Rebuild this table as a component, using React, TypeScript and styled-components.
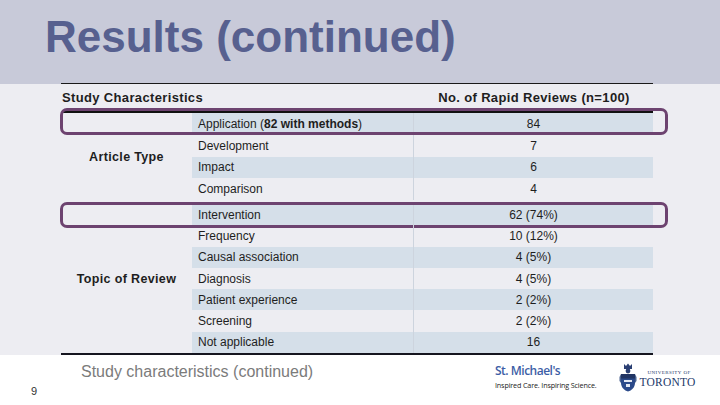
import React from "react";
import styled, { createGlobalStyle } from "styled-components";

const Global = createGlobalStyle`
  html, body { margin: 0; padding: 0; background: #ffffff; }
  body { width: 720px; height: 405px; overflow: hidden; font-family: "Liberation Sans", Arial, sans-serif; }
`;

const Slide = styled.div`
  width: 720px;
  height: 405px;
  display: flex;
  flex-direction: column;
  background: #ffffff;
`;

const Header = styled.header`
  height: 84px;
  flex: none;
  background: #c8cad9;
  box-sizing: border-box;
  padding: 15px 0 0 45px;
`;

const Title = styled.h1`
  margin: 0;
  font-family: "Liberation Sans", Arial, sans-serif;
  font-weight: 700;
  font-size: 44px;
  line-height: 44px;
  color: #57608f;
`;

const Body = styled.main`
  height: 271px;
  flex: none;
  background: #ededf2;
  padding-left: 61px;
  box-sizing: border-box;
`;

const Table = styled.div`
  width: 592px;
  border-top: 1px solid #1a1a1a;
  margin-top: -1px;
  display: flex;
  flex-direction: column;
  font-family: "Liberation Sans", Arial, sans-serif;
  color: #1e1e1e;
`;

const HeadRow = styled.div`
  height: 27px;
  display: grid;
  grid-template-columns: 352px 1fr;
  align-items: center;
  border-bottom: 2px solid #111111;
  margin-left: 2px;
  font-weight: 700;
  font-size: 13px;
  letter-spacing: 0.35px;
`;

const HeadCell = styled.div<{ $center?: boolean }>`
  text-align: ${(p) => (p.$center ? "center" : "left")};
  margin-left: ${(p) => (p.$center ? "0" : "-1px")};
`;

const Group = styled.div<{ $gap?: number }>`
  display: flex;
  margin-top: ${(p) => p.$gap ?? 0}px;
`;

const GroupLabel = styled.div`
  width: 131px;
  flex: none;
  display: flex;
  align-items: center;
  justify-content: center;
  font-weight: 700;
  font-size: 12.5px;
  letter-spacing: 0.35px;
  box-sizing: border-box;
`;

const Rows = styled.div`
  flex: 1;
  display: flex;
  flex-direction: column;
`;

const Row = styled.div<{ $shade?: boolean; $h: number }>`
  position: relative;
  height: ${(p) => p.$h}px;
  display: grid;
  grid-template-columns: 221px 1fr;
  align-items: center;
  background: ${(p) => (p.$shade ? "#d5dfe9" : "transparent")};
  font-size: 12px;
`;

const NameCell = styled.div`
  padding-left: 6px;
  white-space: nowrap;
`;

const ValueCell = styled.div`
  height: 100%;
  display: flex;
  align-items: center;
  justify-content: center;
  border-left: 1px solid #cdd4de;
  box-sizing: border-box;
`;

const Highlight = styled.div<{ $top: number; $height: number }>`
  position: absolute;
  left: -132px;
  right: -15px;
  top: ${(p) => p.$top}px;
  height: ${(p) => p.$height}px;
  border: 3px solid #6d4370;
  border-radius: 7px;
  box-sizing: border-box;
  pointer-events: none;
`;

const BottomRule = styled.div`
  height: 2px;
  background: #15151f;
`;

const Footer = styled.footer`
  flex: 1;
  display: flex;
  align-items: flex-start;
`;

const FootLeft = styled.div`
  width: 480px;
  display: flex;
  flex-direction: column;
`;

const Caption = styled.div`
  margin: 8px 0 0 81px;
  font-family: "Liberation Sans", Arial, sans-serif;
  font-size: 16px;
  line-height: 18px;
  color: #7b7b7b;
`;

const PageNum = styled.div`
  margin: 4px 0 0 31px;
  font-family: "Liberation Sans", Arial, sans-serif;
  font-size: 11px;
  color: #333;
`;

const Logos = styled.div`
  display: flex;
  align-items: flex-start;
  gap: 22px;
  margin: 8px 0 0 15px;
`;

const SMH = styled.div`
  display: flex;
  flex-direction: column;
  margin-top: 1px;
`;

const SMHName = styled.div`
  font-family: "Open Sans", "Liberation Sans", sans-serif;
  font-weight: 600;
  font-size: 12px;
  line-height: 14px;
  color: #3d5ea6;
  letter-spacing: -0.5px;
`;

const SMHTag = styled.div`
  margin-top: 3px;
  font-family: "Open Sans", "Liberation Sans", sans-serif;
  font-size: 7.2px;
  line-height: 9px;
  color: #222;
  letter-spacing: -0.15px;
`;

const UofT = styled.div`
  display: flex;
  align-items: center;
  gap: 3px;
`;

const UofTText = styled.div`
  display: flex;
  flex-direction: column;
  align-items: center;
  font-family: "Liberation Serif", "Times New Roman", serif;
  color: #23396a;
  padding-top: 2px;
`;

const UofTSmall = styled.div`
  font-size: 5px;
  letter-spacing: 0.45px;
  line-height: 7px;
  padding-left: 3px;
`;

const UofTBig = styled.div`
  font-size: 11.5px;
  line-height: 13px;
  letter-spacing: 0.2px;
`;

type Item = { name: React.ReactNode; value: string; hl?: { top: number; height: number } };

const article: Item[] = [
  {
    name: (
      <>
        Application (<b>82 with methods</b>)
      </>
    ),
    value: "84",
    hl: { top: -5, height: 27 },
  },
  { name: "Development", value: "7" },
  { name: "Impact", value: "6" },
  { name: "Comparison", value: "4" },
];

const topic: Item[] = [
  { name: "Intervention", value: "62 (74%)", hl: { top: -2, height: 26 } },
  { name: "Frequency", value: "10 (12%)" },
  { name: "Causal association", value: "4 (5%)" },
  { name: "Diagnosis", value: "4 (5%)" },
  { name: "Patient experience", value: "2 (2%)" },
  { name: "Screening", value: "2 (2%)" },
  { name: "Not applicable", value: "16" },
];

const Crest = () => (
  <svg width="18" height="29" viewBox="0 0 18 29">
    <path d="M5 1 L7 3 L9 0.5 L11 3 L13 1 L13 6 L5 6 Z" fill="#2a3f73" />
    <circle cx="9" cy="8" r="2.4" fill="#2a3f73" />
    <path d="M2 11 H16 V20 C16 24.5 12.5 27.5 9 28.5 C5.5 27.5 2 24.5 2 20 Z" fill="#2b4a8a" />
    <rect x="2" y="11" width="14" height="4.5" fill="#213463" />
    <path d="M5 17 h8 v2 h-8 z M7 21 h4 v3 h-4 z" fill="#e3e8f2" />
    <path d="M0.5 14 L2 11 L2 20 L0.5 18 Z M17.5 14 L16 11 L16 20 L17.5 18 Z" fill="#4a628f" />
  </svg>
);

export default function App() {
  return (
    <>
      <Global />
      <Slide>
        <Header>
          <Title>Results (continued)</Title>
        </Header>
        <Body>
          <Table>
            <HeadRow>
              <HeadCell>Study Characteristics</HeadCell>
              <HeadCell $center>No. of Rapid Reviews (n=100)</HeadCell>
            </HeadRow>
            <Group>
              <GroupLabel>Article Type</GroupLabel>
              <Rows>
                {article.map((it, i) => (
                  <Row key={i} $h={21.75} $shade={i % 2 === 0}>
                    <NameCell>{it.name}</NameCell>
                    <ValueCell>{it.value}</ValueCell>
                    {it.hl && <Highlight $top={it.hl.top} $height={it.hl.height} />}
                  </Row>
                ))}
              </Rows>
            </Group>
            <Group $gap={4}>
              <GroupLabel>Topic of Review</GroupLabel>
              <Rows>
                {topic.map((it, i) => (
                  <Row key={i} $h={21.3} $shade={i % 2 === 0}>
                    <NameCell>{it.name}</NameCell>
                    <ValueCell>{it.value}</ValueCell>
                    {it.hl && <Highlight $top={it.hl.top} $height={it.hl.height} />}
                  </Row>
                ))}
              </Rows>
            </Group>
            <BottomRule />
          </Table>
        </Body>
        <Footer>
          <FootLeft>
            <Caption>Study characteristics (continued)</Caption>
            <PageNum>9</PageNum>
          </FootLeft>
          <Logos>
            <SMH>
              <SMHName>St. Michael's</SMHName>
              <SMHTag>Inspired Care. Inspiring Science.</SMHTag>
            </SMH>
            <UofT>
              <Crest />
              <UofTText>
                <UofTSmall>UNIVERSITY OF</UofTSmall>
                <UofTBig>TORONTO</UofTBig>
              </UofTText>
            </UofT>
          </Logos>
        </Footer>
      </Slide>
    </>
  );
}
